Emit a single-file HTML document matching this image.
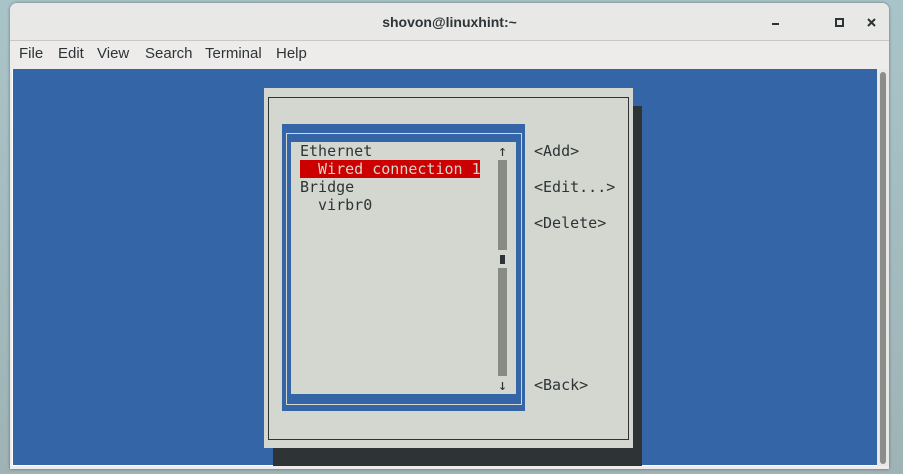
<!DOCTYPE html>
<html><head><style>
body{margin:0;width:903px;height:474px;background:linear-gradient(180deg,#a9c4c8,#9fb3b6);position:relative;overflow:hidden;font-family:"Liberation Sans",sans-serif}
.a{position:absolute}
.win{left:10px;top:3px;width:879px;height:466px;background:#edeceb;border-radius:7px 7px 0 0;box-shadow:0 0 3px rgba(0,0,0,.4)}
.title{left:10px;top:3px;width:879px;height:37px;background:#e8e8e7;border-radius:7px 7px 0 0;border-bottom:1px solid #c8c7c5;text-align:center;line-height:38px;font-size:14px;color:#2e3436;font-weight:bold}
.m{top:45px;font-size:15px;color:#2e3436}
.term{left:12px;top:69px;width:865px;height:396px;background:#3465a6;border-left:1px solid #fff;border-bottom:1px solid #fff}
.mono{font-family:"DejaVu Sans Mono","Liberation Mono",monospace;font-size:15px;color:#2e3436;line-height:18px;white-space:pre}
</style></head><body>
<div class="a win"></div>
<div class="a title">shovon@linuxhint:~</div>
<div class="a" style="left:772px;top:14px;font-size:14px;color:#2e3436">
<div class="a" style="left:0;top:9px;width:7px;height:2px;background:#2e3436"></div>
<div class="a" style="left:63px;top:4px;width:5px;height:5px;border:2px solid #2e3436"></div>
<div class="a" style="left:95px;top:0px;width:8px;height:8px">
<svg width="9" height="9" viewBox="0 0 9 9"><path d="M1 1L8 8M8 1L1 8" stroke="#2e3436" stroke-width="2"/></svg></div>
</div>
<div class="a m" style="left:19px">File</div>
<div class="a m" style="left:58px">Edit</div>
<div class="a m" style="left:97px">View</div>
<div class="a m" style="left:145px">Search</div>
<div class="a m" style="left:205px">Terminal</div>
<div class="a m" style="left:276px">Help</div>
<div class="a term"></div>
<div class="a" style="left:877px;top:69px;width:12px;height:397px;background:#e8e8e7"></div>
<div class="a" style="left:880px;top:72px;width:6px;height:392px;background:#8a8d8a;border-radius:3px"></div>
<div class="a" style="left:273px;top:106px;width:369px;height:360px;background:#2e3436"></div>
<div class="a" style="left:264px;top:88px;width:369px;height:360px;background:#d3d7cf"></div>
<div class="a" style="left:268px;top:97px;width:359px;height:341px;border:1px solid #2e3436"></div>
<div class="a" style="left:282px;top:124px;width:243px;height:287px;background:#3465a6"></div>
<div class="a" style="left:286px;top:133px;width:234px;height:270px;border:1px solid #d3d7cf"></div>
<div class="a" style="left:291px;top:142px;width:225px;height:252px;background:#d3d7cf"></div>
<div class="a" style="left:300px;top:160px;width:180px;height:18px;background:#cc0000"></div>
<div class="a mono" style="left:300px;top:142px">Ethernet
<span style="color:#d3d7cf">  Wired connection 1</span>
Bridge
  virbr0</div>
<div class="a mono" style="left:498px;top:142px">↑</div>
<div class="a" style="left:498px;top:160px;width:9px;height:90px;background:#888a85"></div>
<div class="a" style="left:500px;top:255px;width:5px;height:9px;background:#2e3436"></div>
<div class="a" style="left:498px;top:268px;width:9px;height:108px;background:#888a85"></div>
<div class="a mono" style="left:498px;top:376px">↓</div>
<div class="a mono" style="left:534px;top:142px">&lt;Add&gt;</div>
<div class="a mono" style="left:534px;top:178px">&lt;Edit...&gt;</div>
<div class="a mono" style="left:534px;top:214px">&lt;Delete&gt;</div>
<div class="a mono" style="left:534px;top:376px">&lt;Back&gt;</div>
</body></html>
